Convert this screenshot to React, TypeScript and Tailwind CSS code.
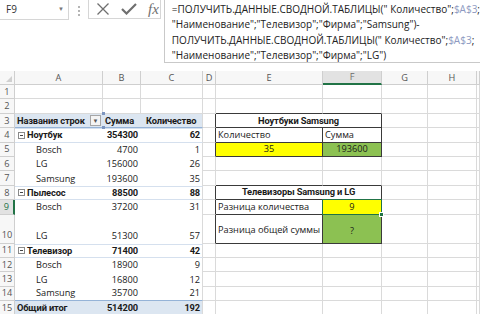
import React from 'react';

const N = 'border-r border-b border-[#dadada]';
const BR = 'border-r border-b border-r-[#3a3a3a] border-b-[#dadada]';
const BB = 'border-r border-b border-r-[#dadada] border-b-[#3a3a3a]';
const BRB = 'border-r border-b border-[#3a3a3a]';
const CH = 'bg-[#f7f7f7] border-r border-b border-[#cfcfcf] justify-center text-[#555]';
const RH = 'bg-[#f7f7f7] border-r border-b border-[#cfcfcf] justify-center text-[#555]';
const BOLD = " font-bold font-['Roboto',sans-serif] tracking-[-0.15px] text-[9.3px]";

function Cell({ c = '', children }: { c?: string; children?: React.ReactNode }) {
  return <div className={`flex items-center whitespace-nowrap min-w-0 ${c}`}>{children}</div>;
}

function Minus() {
  return (
    <span className="w-[7px] h-[7px] border border-[#8a8a8a] flex items-center justify-center mr-[2px] shrink-0">
      <span className="w-[3px] h-px bg-[#444]" />
    </span>
  );
}

function Cat({ name }: { name: string }) {
  return (
    <span className="flex items-center">
      <Minus />
      {name}
    </span>
  );
}

export default function App() {
  const pivHead = 'bg-[#dce6f1] border-b border-[#95b3d7]' + BOLD;
  const catLine = 'border-y border-[#d5e0ee]' + BOLD;
  return (
    <div className="w-[480px] h-[314px] overflow-hidden bg-white font-['Open_Sans','Noto_Sans',sans-serif] text-[#1a1a1a] text-[9.2px]">
      {/* formula bar */}
      <div className="h-[71px] flex items-start">
        <div className="w-[75px] h-[20px] border-r border-b border-[#d6d6d6] flex items-center pl-[6px] text-[10px] text-[#333]">
          F9
          <span className="ml-auto mr-[4px] text-[6px] text-[#777]">▼</span>
        </div>
        <div className="w-[21px] flex flex-col items-center gap-[2px] pt-[6px]">
          <span className="w-[2px] h-[2px] bg-[#b5b5b5]" />
          <span className="w-[2px] h-[2px] bg-[#b5b5b5]" />
          <span className="w-[2px] h-[2px] bg-[#b5b5b5]" />
        </div>
        <div className="w-[79px] h-[19px] border-x border-b border-[#d6d6d6] flex items-center pl-[7px]">
          <svg width="14" height="12" viewBox="0 0 14 12">
            <path d="M1.5 0.5 L12.5 11.5 M12.5 0.5 L1.5 11.5" stroke="#6f6f6f" strokeWidth="1.3" fill="none" />
          </svg>
          <svg width="16" height="12" viewBox="0 0 16 12" className="ml-[11px]">
            <path d="M1 6 L5.5 10.5 L15 1" stroke="#6f6f6f" strokeWidth="2.2" fill="none" />
          </svg>
          <span className="ml-[11px] font-['Liberation_Serif',serif] italic text-[15px] leading-none text-[#707070]">fx</span>
        </div>
        <div className="ml-[3px] flex-1 h-[63px] border-l border-b border-[#c9c9c9] pl-[7px] pt-[2px] text-[10px] leading-[15.4px] text-[#222] whitespace-nowrap">
          <div>
            =ПОЛУЧИТЬ.ДАННЫЕ.СВОДНОЙ.ТАБЛИЦЫ(" Количество";<span className="text-[#8e9ac2]">$A$3</span>;
          </div>
          <div>"Наименование";"Телевизор";"Фирма";"Samsung")-</div>
          <div>
            ПОЛУЧИТЬ.ДАННЫЕ.СВОДНОЙ.ТАБЛИЦЫ(" Количество";<span className="text-[#8e9ac2]">$A$3</span>;
          </div>
          <div>"Наименование";"Телевизор";"Фирма";"LG")</div>
        </div>
      </div>

      {/* grid */}
      <div className="grid grid-cols-[15px_88px_38px_62px_13px_107px_59px_46px_49px_1fr] grid-rows-[14px_repeat(9,14.4px)_29px_repeat(5,14.4px)]">
        {/* column headers */}
        <Cell c="bg-[#f7f7f7] border-r border-b border-[#cfcfcf] justify-end items-end">
          <svg width="8" height="8" viewBox="0 0 8 8" className="mr-[1px] mb-[1px]">
            <path d="M7 1 L7 7 L1 7 Z" fill="#d0d0d0" />
          </svg>
        </Cell>
        <Cell c={CH}>A</Cell>
        <Cell c={CH}>B</Cell>
        <Cell c={CH}>C</Cell>
        <Cell c={CH}>D</Cell>
        <Cell c={CH}>E</Cell>
        <Cell c="bg-[#e2e2e2] border-r border-b-2 border-r-[#cfcfcf] border-b-[#217346] justify-center text-[#6b6b6b]">F</Cell>
        <Cell c={CH}>G</Cell>
        <Cell c={CH}>H</Cell>
        <Cell c={CH} />

        {/* row 1 */}
        <Cell c={RH}>1</Cell>
        <Cell c={N} /><Cell c={N} /><Cell c={N} /><Cell c={N} /><Cell c={N} /><Cell c={N} />
        <Cell c={N} /><Cell c={N} /><Cell c={N} />

        {/* row 2 */}
        <Cell c={RH}>2</Cell>
        <Cell c={N} /><Cell c={N} /><Cell c={N} /><Cell c={N} />
        <Cell c={BB} /><Cell c={BB} />
        <Cell c={N} /><Cell c={N} /><Cell c={N} />

        {/* row 3 */}
        <Cell c={RH}>3</Cell>
        <Cell c={pivHead + ' pl-[2px] relative'}>
          Названия строк
          <span className="ml-auto mr-[2px] w-[11px] h-[11px] border border-[#a6a6a6] bg-[#f4f4f4] flex items-center justify-center text-[6px] text-[#555] font-normal">▼</span>
          <span className="absolute right-[-2px] top-[-2px] w-[3px] h-[3px] bg-[#7c95bf]" />
          <span className="absolute right-[-2px] bottom-[-2px] w-[3px] h-[3px] bg-[#7c95bf]" />
        </Cell>
        <Cell c={pivHead + ' pl-[2px]'}>Сумма</Cell>
        <Cell c={'bg-[#dce6f1] border-r border-b border-r-[#dadada] border-b-[#95b3d7] pl-[5px]' + BOLD}>Количество</Cell>
        <Cell c={BR} />
        <Cell c={BRB + ' col-span-2 justify-center' + BOLD}>Ноутбуки Samsung</Cell>
        <Cell c={N} /><Cell c={N} /><Cell c={N} />

        {/* row 4 */}
        <Cell c={RH}>4</Cell>
        <Cell c={catLine + ' pl-[3px]'}><Cat name="Ноутбук" /></Cell>
        <Cell c={catLine + ' justify-end pr-[3px]'}>354300</Cell>
        <Cell c={catLine + ' border-r border-r-[#dadada] justify-end pr-[2px]'}>62</Cell>
        <Cell c={BR} />
        <Cell c={BRB + ' pl-[2px]'}>Количество</Cell>
        <Cell c={BRB + ' pl-[2px]'}>Сумма</Cell>
        <Cell c={N} /><Cell c={N} /><Cell c={N} />

        {/* row 5 */}
        <Cell c={RH}>5</Cell>
        <Cell c="pl-[21px]">Bosch</Cell>
        <Cell c="justify-end pr-[3px]">4700</Cell>
        <Cell c="border-r border-[#dadada] justify-end pr-[2px]">1</Cell>
        <Cell c={BR} />
        <Cell c={BRB + ' bg-[#ffff00] justify-center'}>35</Cell>
        <Cell c={BRB + ' bg-[#8cc152] justify-center'}>193600</Cell>
        <Cell c={N} /><Cell c={N} /><Cell c={N} />

        {/* row 6 */}
        <Cell c={RH}>6</Cell>
        <Cell c="pl-[21px]">LG</Cell>
        <Cell c="justify-end pr-[3px]">156000</Cell>
        <Cell c="border-r border-[#dadada] justify-end pr-[2px]">26</Cell>
        <Cell c={N} /><Cell c={N} /><Cell c={N} />
        <Cell c={N} /><Cell c={N} /><Cell c={N} />

        {/* row 7 */}
        <Cell c={RH}>7</Cell>
        <Cell c="pl-[21px]">Samsung</Cell>
        <Cell c="justify-end pr-[3px]">193600</Cell>
        <Cell c="border-r border-[#dadada] justify-end pr-[2px]">35</Cell>
        <Cell c={N} />
        <Cell c={BB} /><Cell c={BB} />
        <Cell c={N} /><Cell c={N} /><Cell c={N} />

        {/* row 8 */}
        <Cell c={RH}>8</Cell>
        <Cell c={catLine + ' pl-[3px]'}><Cat name="Пылесос" /></Cell>
        <Cell c={catLine + ' justify-end pr-[3px]'}>88500</Cell>
        <Cell c={catLine + ' border-r border-r-[#dadada] justify-end pr-[2px]'}>88</Cell>
        <Cell c={BR} />
        <Cell c={BRB + ' col-span-2 justify-center' + BOLD}>Телевизоры Samsung и LG</Cell>
        <Cell c={N} /><Cell c={N} /><Cell c={N} />

        {/* row 9 */}
        <Cell c="bg-[#e2e2e2] border-r-2 border-b border-r-[#217346] border-b-[#cfcfcf] justify-center text-[#217346]">9</Cell>
        <Cell c="pl-[21px]">Bosch</Cell>
        <Cell c="justify-end pr-[3px]">37200</Cell>
        <Cell c="border-r border-[#dadada] justify-end pr-[2px]">31</Cell>
        <Cell c={BR} />
        <Cell c={BRB + ' pl-[2px]'}>Разница количества</Cell>
        <Cell c={BRB + ' bg-[#ffff00] justify-center relative'}>
          9
          <span className="absolute inset-[-1px] border border-[#217346]" />
          <span className="absolute right-[-3px] bottom-[-3px] w-[5px] h-[5px] bg-[#217346] border border-white" />
        </Cell>
        <Cell c={N} /><Cell c={N} /><Cell c={N} />

        {/* row 10 */}
        <Cell c={RH + ' items-end pb-[1px]'}>10</Cell>
        <Cell c="pl-[21px] items-end pb-[1px]">LG</Cell>
        <Cell c="justify-end pr-[3px] items-end pb-[1px]">51300</Cell>
        <Cell c="border-r border-[#dadada] justify-end pr-[2px] items-end pb-[1px]">57</Cell>
        <Cell c={BR} />
        <Cell c={BRB + ' pl-[2px] pt-[2px]'}>Разница общей суммы</Cell>
        <Cell c={BRB + ' bg-[#8cc152] justify-center pt-[4px]'}>?</Cell>
        <Cell c={N} /><Cell c={N} /><Cell c={N} />

        {/* row 11 */}
        <Cell c={RH}>11</Cell>
        <Cell c={catLine + ' pl-[3px]'}><Cat name="Телевизор" /></Cell>
        <Cell c={catLine + ' justify-end pr-[3px]'}>71400</Cell>
        <Cell c={catLine + ' border-r border-r-[#dadada] justify-end pr-[2px]'}>42</Cell>
        <Cell c={N} /><Cell c={N} /><Cell c={N} />
        <Cell c={N} /><Cell c={N} /><Cell c={N} />

        {/* row 12 */}
        <Cell c={RH}>12</Cell>
        <Cell c="pl-[21px]">Bosch</Cell>
        <Cell c="justify-end pr-[3px]">18900</Cell>
        <Cell c="border-r border-[#dadada] justify-end pr-[2px]">9</Cell>
        <Cell c={N} /><Cell c={N} /><Cell c={N} />
        <Cell c={N} /><Cell c={N} /><Cell c={N} />

        {/* row 13 */}
        <Cell c={RH}>13</Cell>
        <Cell c="pl-[21px]">LG</Cell>
        <Cell c="justify-end pr-[3px]">16800</Cell>
        <Cell c="border-r border-[#dadada] justify-end pr-[2px]">12</Cell>
        <Cell c={N} /><Cell c={N} /><Cell c={N} />
        <Cell c={N} /><Cell c={N} /><Cell c={N} />

        {/* row 14 */}
        <Cell c={RH}>14</Cell>
        <Cell c="pl-[21px] border-b border-[#95b3d7]">Samsung</Cell>
        <Cell c="justify-end pr-[3px] border-b border-[#95b3d7]">35700</Cell>
        <Cell c="border-r border-b border-r-[#dadada] border-b-[#95b3d7] justify-end pr-[2px]">21</Cell>
        <Cell c={N} /><Cell c={N} /><Cell c={N} />
        <Cell c={N} /><Cell c={N} /><Cell c={N} />

        {/* row 15 */}
        <Cell c={RH}>15</Cell>
        <Cell c={'bg-[#dce6f1] pl-[2px]' + BOLD}>Общий итог</Cell>
        <Cell c={'bg-[#dce6f1] justify-end pr-[3px]' + BOLD}>514200</Cell>
        <Cell c={'bg-[#dce6f1] border-r border-[#dadada] justify-end pr-[2px]' + BOLD}>192</Cell>
        <Cell c={N} /><Cell c={N} /><Cell c={N} />
        <Cell c={N} /><Cell c={N} /><Cell c={N} />
      </div>
    </div>
  );
}
